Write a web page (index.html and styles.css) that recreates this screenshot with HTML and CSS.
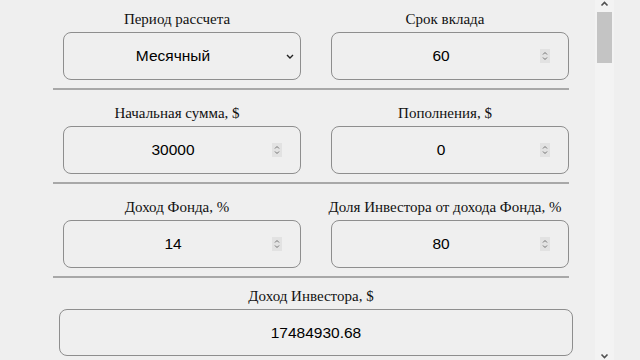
FILE: index.html
```html
<!DOCTYPE html>
<html lang="ru">
<head>
<meta charset="utf-8">
<title>Калькулятор</title>
<link rel="stylesheet" href="styles.css">
</head>
<body>
<div class="page">
  <div class="scroller">
    <form class="calc">
      <div class="row first">
        <div class="cell">
          <div class="label">Период рассчета</div>
          <div class="field select">
            <span class="value">Месячный</span>
            <svg class="arrow" width="8" height="5" viewBox="0 0 8 5"><path d="M1 1 L4 4 L7 1" fill="none" stroke="#222" stroke-width="1.4"/></svg>
          </div>
        </div>
        <div class="cell">
          <div class="label">Срок вклада</div>
          <div class="field">
            <span class="value">60</span>
            <svg class="spin" width="10" height="14" viewBox="0 0 10 14"><rect width="10" height="14" fill="#e2e2e2"/><path d="M3 5.5 L5 3.5 L7 5.5 M3 8.5 L5 10.5 L7 8.5" fill="none" stroke="#707070" stroke-width="1"/></svg>
          </div>
        </div>
      </div>
      <div class="row">
        <div class="cell">
          <div class="label">Начальная сумма, $</div>
          <div class="field">
            <span class="value">30000</span>
            <svg class="spin" width="10" height="14" viewBox="0 0 10 14"><rect width="10" height="14" fill="#e2e2e2"/><path d="M3 5.5 L5 3.5 L7 5.5 M3 8.5 L5 10.5 L7 8.5" fill="none" stroke="#707070" stroke-width="1"/></svg>
          </div>
        </div>
        <div class="cell">
          <div class="label">Пополнения, $</div>
          <div class="field">
            <span class="value">0</span>
            <svg class="spin" width="10" height="14" viewBox="0 0 10 14"><rect width="10" height="14" fill="#e2e2e2"/><path d="M3 5.5 L5 3.5 L7 5.5 M3 8.5 L5 10.5 L7 8.5" fill="none" stroke="#707070" stroke-width="1"/></svg>
          </div>
        </div>
      </div>
      <div class="row">
        <div class="cell">
          <div class="label">Доход Фонда, %</div>
          <div class="field">
            <span class="value">14</span>
            <svg class="spin" width="10" height="14" viewBox="0 0 10 14"><rect width="10" height="14" fill="#e2e2e2"/><path d="M3 5.5 L5 3.5 L7 5.5 M3 8.5 L5 10.5 L7 8.5" fill="none" stroke="#707070" stroke-width="1"/></svg>
          </div>
        </div>
        <div class="cell">
          <div class="label">Доля Инвестора от дохода Фонда, %</div>
          <div class="field">
            <span class="value">80</span>
            <svg class="spin" width="10" height="14" viewBox="0 0 10 14"><rect width="10" height="14" fill="#e2e2e2"/><path d="M3 5.5 L5 3.5 L7 5.5 M3 8.5 L5 10.5 L7 8.5" fill="none" stroke="#707070" stroke-width="1"/></svg>
          </div>
        </div>
      </div>
      <div class="row last">
        <div class="cell wide">
          <div class="label">Доход Инвестора, $</div>
          <div class="field result">
            <span class="value">17484930.68</span>
          </div>
        </div>
      </div>
    </form>
  </div>
  <div class="sbar">
    <svg class="sb-arrow" width="9" height="6" viewBox="0 0 9 6"><path d="M1.5 4.5 L4.5 1.5 L7.5 4.5" fill="none" stroke="#505050" stroke-width="1.6"/></svg>
    <div class="thumb"></div>
    <div class="track"></div>
    <svg class="sb-arrow" width="9" height="6" viewBox="0 0 9 6"><path d="M1.5 1.5 L4.5 4.5 L7.5 1.5" fill="none" stroke="#505050" stroke-width="1.6"/></svg>
  </div>
  <div class="gutter"></div>
</div>
</body>
</html>
```

FILE: styles.css
```css
html, body {
  margin: 0;
  padding: 0;
  width: 640px;
  height: 360px;
  overflow: hidden;
  background: #efefef;
}

.page {
  display: flex;
  height: 360px;
}

.scroller {
  width: 595px;
  height: 360px;
  overflow: hidden;
}

.calc {
  margin: 0 0 0 53px;
  width: 516px;
  display: flex;
  flex-direction: column;
}

.row {
  display: flex;
  gap: 20px;
  padding: 15px 0 8px;
  border-top: 2px solid #a8a8a8;
}

.row.first {
  border-top: none;
  padding-top: 11px;
}

.row.last {
  padding-top: 10px;
}

.cell {
  width: 248px;
  display: flex;
  flex-direction: column;
}

.cell.wide {
  width: 516px;
}

.label {
  font-family: "Liberation Serif", "Times New Roman", serif;
  font-size: 15px;
  line-height: 17px;
  color: #111;
  text-align: center;
  margin-bottom: 4px;
}

.field {
  margin-left: 10px;
  width: 238px;
  height: 48px;
  box-sizing: border-box;
  border: 1px solid #8e8e8e;
  border-radius: 8px;
  display: flex;
  align-items: center;
  padding: 0 18px 0 10px;
  font-family: "Liberation Sans", Arial, sans-serif;
  font-size: 15.5px;
  color: #000;
}

.field.select {
  padding: 0 6px 0 10px;
}

.field.result {
  margin-left: 6px;
  width: 514px;
  height: 47px;
  padding: 0 10px;
}

.value {
  flex: 1;
  text-align: center;
}

.spin {
  display: block;
  flex: none;
}

.arrow {
  display: block;
  flex: none;
  margin-left: 14px;
}

.sbar {
  width: 19px;
  height: 360px;
  background: #f3f3f3;
  display: flex;
  flex-direction: column;
  align-items: center;
}

.sb-arrow {
  display: block;
  margin: 1px 0 5px;
}

.thumb {
  width: 15px;
  height: 51px;
  background: #c4c4c4;
}

.track {
  flex: 1;
}

.sbar .sb-arrow:last-child {
  margin: 0 0 1px;
}

.gutter {
  flex: 1;
}
```
